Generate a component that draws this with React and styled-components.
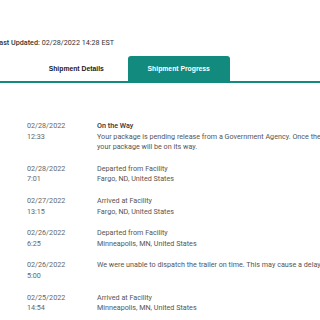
import React from "react";
import styled, { createGlobalStyle } from "styled-components";

const Global = createGlobalStyle`
  html, body { margin: 0; padding: 0; background: #fff; }
  body { font-family: Roboto, "Liberation Sans", sans-serif; overflow: hidden; }
`;

const TEAL = "#128a7e";

const Page = styled.div`
  width: 320px;
  height: 320px;
  overflow: hidden;
  padding-top: 37px;
  box-sizing: border-box;
`;

const Updated = styled.div`
  margin-left: -4.6px;
  font-size: 7.2px;
  line-height: 11px;
  color: #333;
  white-space: nowrap;
  b { font-weight: 500; }
`;

const Tabs = styled.div`
  display: flex;
  margin-top: 7.5px;
  padding-left: 25px;
  border-bottom: 2px solid ${TEAL};
`;

const Tab = styled.div`
  width: 102.5px;
  height: 25.5px;
  display: flex;
  align-items: center;
  justify-content: center;
  font-family: "Liberation Sans", Arial, sans-serif;
  font-weight: 700;
  font-size: 6.8px;
  color: ${(p) => (p.$active ? "#fff" : "#222")};
  background: ${(p) => (p.$active ? TEAL : "transparent")};
  border-radius: 3px 3px 0 0;
`;

const List = styled.div`
  padding-top: 38px;
  padding-left: 27px;
  display: flex;
  flex-direction: column;
  gap: 11px;
`;

const Row = styled.div`
  display: grid;
  grid-template-columns: 70px 1fr;
  font-size: 7.2px;
  line-height: 10.6px;
  white-space: nowrap;
`;

const DateCol = styled.div`
  color: #666;
`;

const Info = styled.div`
  color: #555;
`;

const Title = styled.div`
  color: #333;
  font-weight: 500;
`;

const events = [
  {
    d: "02/28/2022",
    t: "12:33",
    title: "On the Way",
    lines: [
      "Your package is pending release from a Government Agency. Once the",
      "your package will be on its way.",
    ],
  },
  { d: "02/28/2022", t: "7:01", lines: ["Departed from Facility", "Fargo, ND, United States"] },
  { d: "02/27/2022", t: "13:15", lines: ["Arrived at Facility", "Fargo, ND, United States"] },
  { d: "02/26/2022", t: "6:25", lines: ["Departed from Facility", "Minneapolis, MN, United States"] },
  {
    d: "02/26/2022",
    t: "5:00",
    lines: ["We were unable to dispatch the trailer on time. This may cause a delay."],
  },
  { d: "02/25/2022", t: "14:54", lines: ["Arrived at Facility", "Minneapolis, MN, United States"] },
];

export default function App() {
  return (
    <Page>
      <Global />
      <Updated>
        <b>Last Updated:</b> 02/28/2022 14:28 EST
      </Updated>
      <Tabs>
        <Tab>Shipment Details</Tab>
        <Tab $active>Shipment Progress</Tab>
      </Tabs>
      <List>
        {events.map((e, i) => (
          <Row key={i}>
            <DateCol>
              <div>{e.d}</div>
              <div>{e.t}</div>
            </DateCol>
            <Info>
              {e.title && <Title>{e.title}</Title>}
              {e.lines.map((l, j) => (
                <div key={j}>{l}</div>
              ))}
            </Info>
          </Row>
        ))}
      </List>
    </Page>
  );
}
